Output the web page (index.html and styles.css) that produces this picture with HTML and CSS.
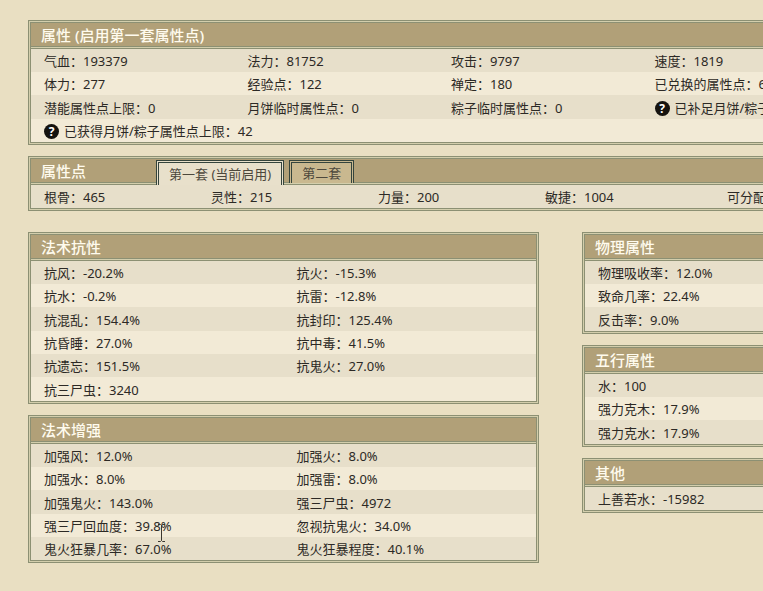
FILE: index.html
```
<!DOCTYPE html>
<html lang="zh-CN">
<head>
  <meta charset="UTF-8" />
  <meta name="viewport" content="width=device-width, initial-scale=1.0"/>
  <title>属性</title>
  <link rel="stylesheet" href="styles.css">
</head>
<body>
  <main class="page">
    <section class="panel">
      <h2 class="panel-title">属性 (启用第一套属性点)</h2>
      <table class="stats">
        <tr><td>气血：193379</td><td>法力：81752</td><td>攻击：9797</td><td>速度：1819</td></tr>
        <tr><td>体力：277</td><td>经验点：122</td><td>禅定：180</td><td>已兑换的属性点：6</td></tr>
        <tr><td>潜能属性点上限：0</td><td>月饼临时属性点：0</td><td>粽子临时属性点：0</td><td><span class="help">?</span>已补足月饼/粽子</td></tr>
        <tr><td colspan="4"><span class="help">?</span>已获得月饼/粽子属性点上限：42</td></tr>
      </table>
    </section>

    <section class="panel">
      <div class="panel-title with-tabs">
        <h2>属性点</h2>
        <div class="tabs">
          <button type="button" class="tab active">第一套 (当前启用)</button>
          <button type="button" class="tab">第二套</button>
        </div>
      </div>
      <table class="stats points">
        <tr><td>根骨：465</td><td>灵性：215</td><td>力量：200</td><td>敏捷：1004</td><td class="free">可分配</td></tr>
      </table>
    </section>

    <div class="columns">
      <div class="column">
        <section class="panel">
          <h2 class="panel-title">法术抗性</h2>
          <table class="stats">
            <tr><td>抗风：-20.2%</td><td>抗火：-15.3%</td></tr>
            <tr><td>抗水：-0.2%</td><td>抗雷：-12.8%</td></tr>
            <tr><td>抗混乱：154.4%</td><td>抗封印：125.4%</td></tr>
            <tr><td>抗昏睡：27.0%</td><td>抗中毒：41.5%</td></tr>
            <tr><td>抗遗忘：151.5%</td><td>抗鬼火：27.0%</td></tr>
            <tr><td>抗三尸虫：3240</td><td></td></tr>
          </table>
        </section>

        <section class="panel">
          <h2 class="panel-title">法术增强</h2>
          <table class="stats">
            <tr><td>加强风：12.0%</td><td>加强火：8.0%</td></tr>
            <tr><td>加强水：8.0%</td><td>加强雷：8.0%</td></tr>
            <tr><td>加强鬼火：143.0%</td><td>强三尸虫：4972</td></tr>
            <tr>
              <td>强三尸回血度：<span class="pointed">39.8%<svg class="cursor" width="7" height="18" viewBox="0 0 7 18" aria-hidden="true"><path d="M0 .5h2.5l1 1 1-1H7M3.500 1.500v15M0 17.500h2.500l1-1 1 1H7"/></svg></span></td>
              <td>忽视抗鬼火：34.0%</td>
            </tr>
            <tr><td>鬼火狂暴几率：67.0%</td><td>鬼火狂暴程度：40.1%</td></tr>
          </table>
        </section>
      </div>

      <div class="column">
        <section class="panel">
          <h2 class="panel-title">物理属性</h2>
          <table class="stats">
            <tr><td>物理吸收率：12.0%</td></tr>
            <tr><td>致命几率：22.4%</td></tr>
            <tr><td>反击率：9.0%</td></tr>
          </table>
        </section>

        <section class="panel">
          <h2 class="panel-title">五行属性</h2>
          <table class="stats">
            <tr><td>水：100</td></tr>
            <tr><td>强力克木：17.9%</td></tr>
            <tr><td>强力克水：17.9%</td></tr>
          </table>
        </section>

        <section class="panel">
          <h2 class="panel-title">其他</h2>
          <table class="stats">
            <tr><td>上善若水：-15982</td></tr>
          </table>
        </section>
      </div>
    </div>
  </main>
</body>
</html>
```
FILE: styles.css
```
body {
  margin: 0;
  padding: 20px 28px;
  background: #e9dfc2;
  color: #2c2925;
  font-family: "Noto Sans", "Noto Sans CJK SC", sans-serif;
  font-size: 13px;
  overflow-x: hidden;
}

.page {
  min-width: 820px;
  display: flex;
  flex-direction: column;
  gap: 11px;
}

.columns {
  display: grid;
  grid-template-columns: 1fr 266px;
  align-items: start;
  gap: 43px;
  margin-top: 10px;
}

.column {
  display: flex;
  flex-direction: column;
  gap: 11px;
}

.panel {
  border: 3px double #8c9073;
  background: #d3ceac;
}

.panel-title,
.panel-title h2 {
  margin: 0;
  font-size: 15px;
  font-weight: 500;
  line-height: 24px;
  color: #fffbee;
}

.panel-title {
  height: 23px;
  padding-left: 10px;
  border-bottom: 3px double #8c9073;
  background: #b1a078;
  background-clip: padding-box;
}

.with-tabs {
  display: flex;
}

.tabs {
  display: flex;
  align-items: flex-start;
  gap: 5px;
  padding-top: 1px;
  margin-left: 70px;
}

.tab {
  position: relative;
  height: 23px;
  padding: 0 10px;
  border: 3px double #34443c;
  border-bottom: none;
  background: #c9b88f;
  color: #4d483c;
  font-family: inherit;
  font-size: 13px;
  line-height: 19px;
  white-space: nowrap;
  cursor: pointer;
}

/* the open tab runs over the rule under the title */
.tab.active {
  height: 25px;
  background: #e8e0cb;
}

.stats {
  width: 100%;
  table-layout: fixed;
  border-collapse: collapse;
}

.stats tr {
  height: 23px;
  background: #e7dfca;
}

.stats tr:nth-child(3n) {
  height: 24px;
}

.stats tr:nth-child(even) {
  background: #f2ead6;
}

.stats td {
  padding: 1px 0 0 13px;
  line-height: 22px;
  white-space: nowrap;
}

.points .free {
  width: 118px;
  padding-left: 28px;
}

.help {
  display: inline-block;
  width: 15px;
  height: 15px;
  margin-right: 5px;
  border-radius: 50%;
  background: #15130f;
  color: #fff;
  font-size: 12px;
  font-weight: bold;
  line-height: 15px;
  text-align: center;
}

.pointed {
  position: relative;
}

.cursor {
  position: absolute;
  right: 7px;
  top: 7px;
  fill: none;
  stroke: #3b372f;
}
```
